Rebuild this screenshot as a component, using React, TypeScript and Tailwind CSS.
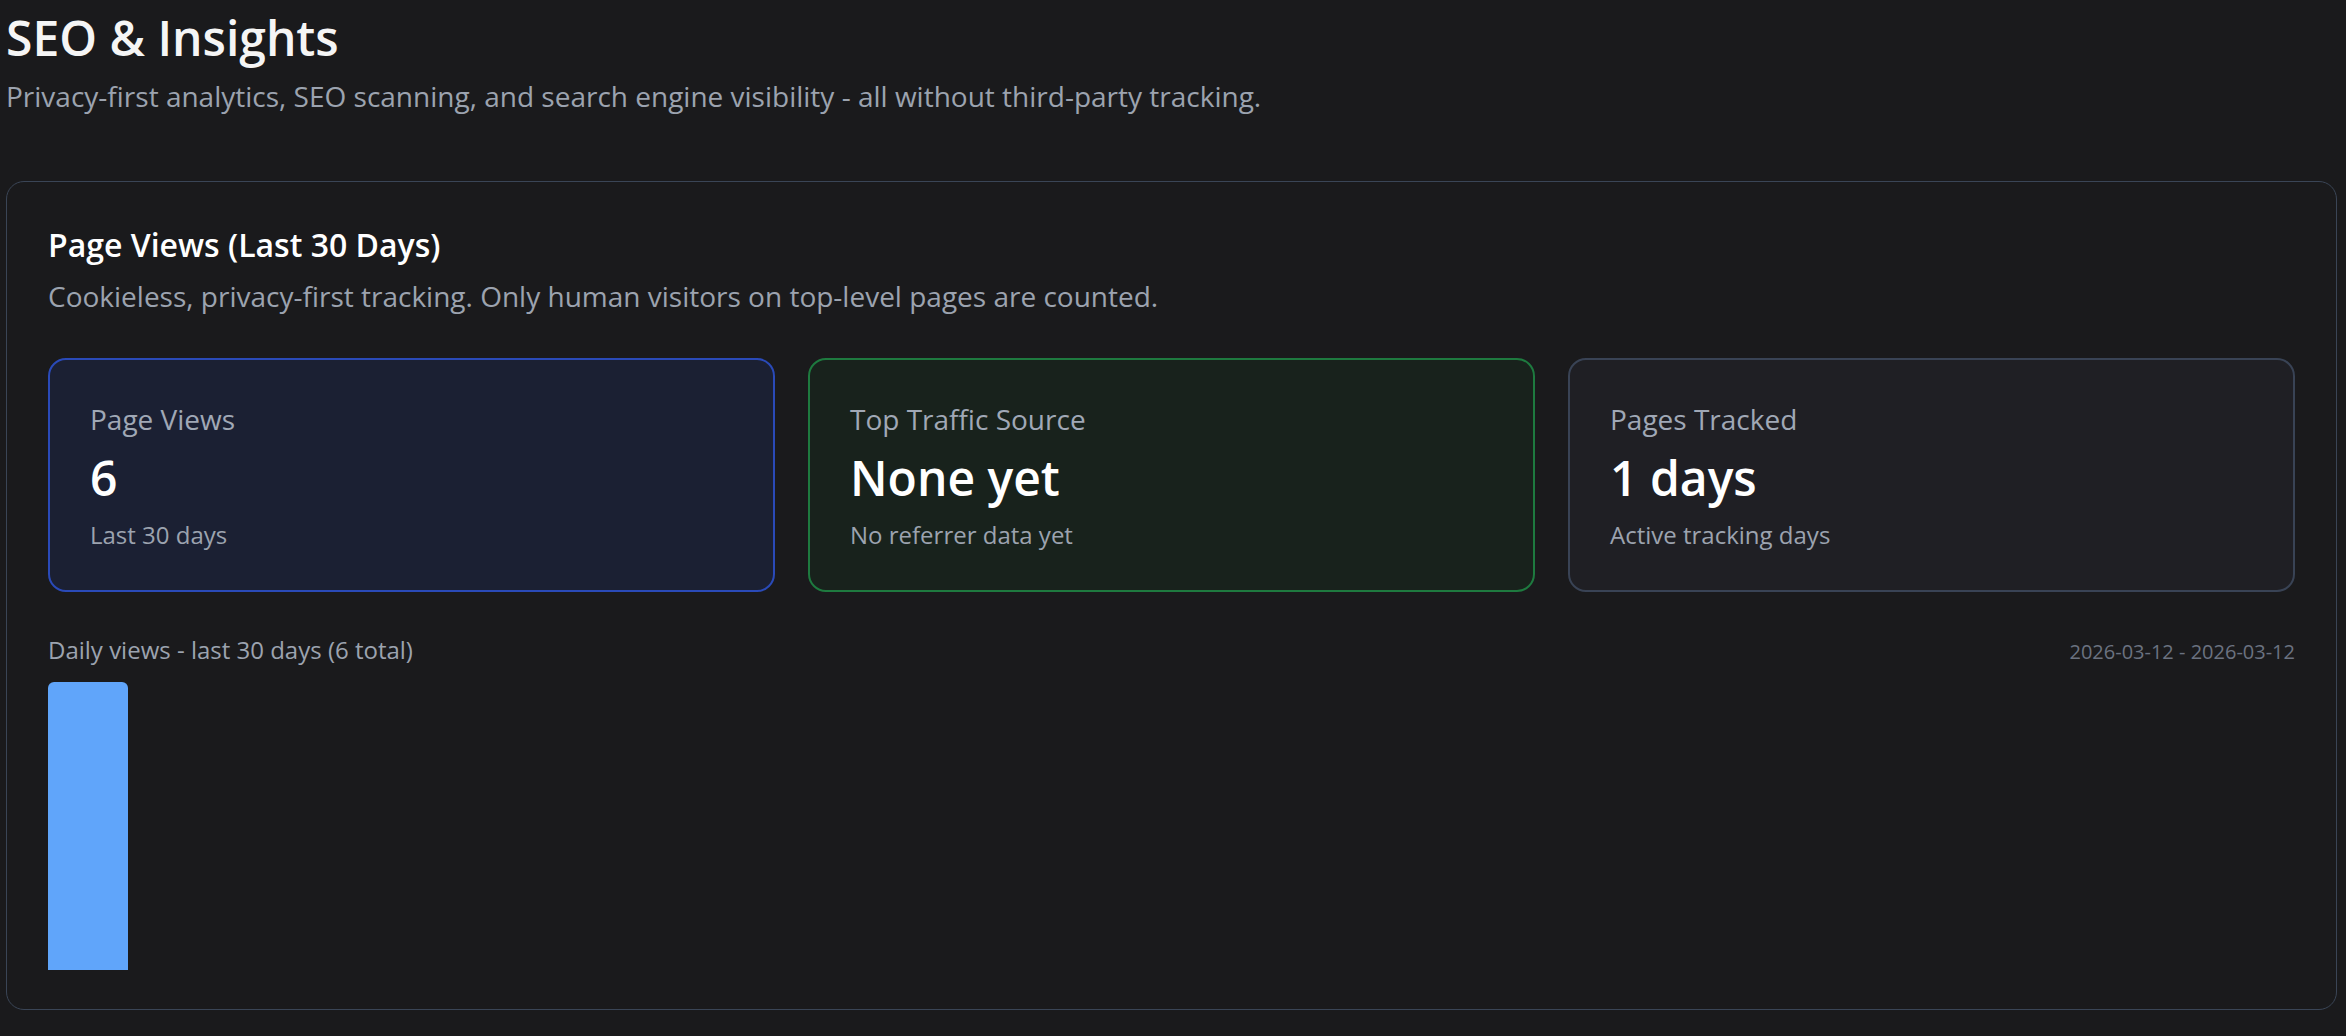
import React from 'react';

interface StatCardProps {
  label: string;
  value: string;
  sub: string;
  tone: 'blue' | 'green' | 'gray';
}

const toneClasses: Record<StatCardProps['tone'], string> = {
  blue: 'bg-[#1b2033] border-[#2a4ab8]',
  green: 'bg-[#18221c] border-[#1e7a3f]',
  gray: 'bg-[#1f1f24] border-[#394355]',
};

const StatCard = ({ label, value, sub, tone }: StatCardProps) => {
  return (
    <div className={`rounded-[18px] border-2 pl-[40px] pr-[40px] pt-[38px] pb-[37px] ${toneClasses[tone]}`}>
      <p className="text-[28px] leading-[42px] text-[#a0a8b6]">{label}</p>
      <h3 className="mt-[10px] text-[48px] leading-[56px] font-semibold text-white">{value}</h3>
      <p className="mt-[11px] text-[24px] leading-[36px] text-[#9ca3af]">{sub}</p>
    </div>
  );
};

export default function App() {
  const days = [{ date: '2026-03-12', views: 6 }];
  const max = Math.max(...days.map((d) => d.views));

  return (
    <div className="min-h-screen bg-[#1a1a1c] pl-[6px] pr-[9px] pt-[10px] font-['Open_Sans',sans-serif]">
      <h1 className="text-[48px] leading-[56px] font-semibold text-[#f5f5f5]">SEO &amp; Insights</h1>
      <p className="mt-[9px] text-[28px] leading-[42px] text-[#9ca3af]">
        Privacy-first analytics, SEO scanning, and search engine visibility - all without third-party tracking.
      </p>

      <div className="mt-[64px] rounded-[18px] border-[1.5px] border-[#3a4556] px-[41px] pt-[41px] pb-[39px]">
        <h2 className="text-[32px] leading-[44px] font-semibold text-white">Page Views (Last 30 Days)</h2>
        <p className="mt-[8px] text-[28px] leading-[42px] text-[#9ca3af]">
          Cookieless, privacy-first tracking. Only human visitors on top-level pages are counted.
        </p>

        <div className="mt-[41px] grid grid-cols-3 gap-[33px]">
          <StatCard label="Page Views" value="6" sub="Last 30 days" tone="blue" />
          <StatCard label="Top Traffic Source" value="None yet" sub="No referrer data yet" tone="green" />
          <StatCard label="Pages Tracked" value="1 days" sub="Active tracking days" tone="gray" />
        </div>

        <div className="mt-[40px] flex items-baseline justify-between">
          <span className="text-[24px] leading-[36px] text-[#9ca3af]">Daily views - last 30 days (6 total)</span>
          <span className="text-[20px] leading-[30px] text-[#6b7280]">2026-03-12 - 2026-03-12</span>
        </div>

        <div className="mt-[14px] flex h-[288px] items-end gap-[6px]">
          {days.map((d) => (
            <div
              key={d.date}
              className="w-[80px] rounded-t-[6px] bg-[#60a5fa]"
              style={{ height: `${(d.views / max) * 100}%` }}
            />
          ))}
        </div>
      </div>
    </div>
  );
}
